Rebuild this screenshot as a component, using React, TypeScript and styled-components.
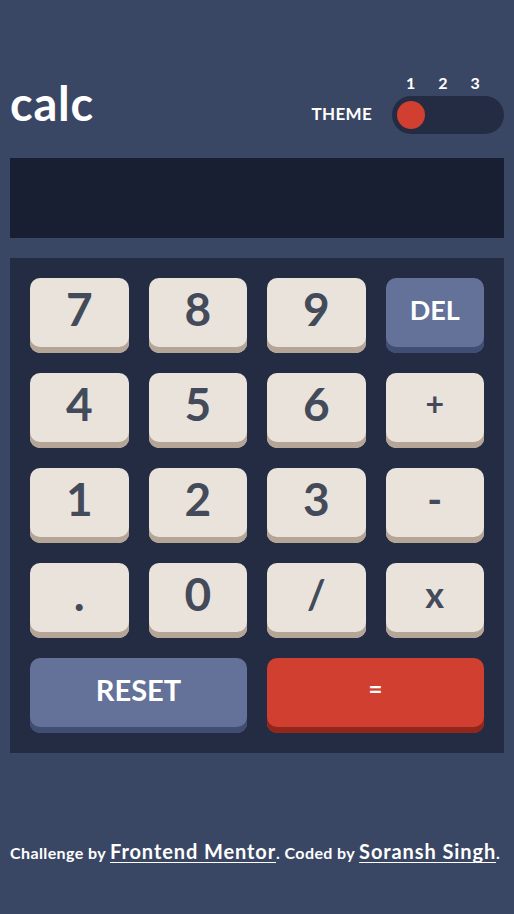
import React from "react";
import styled, { createGlobalStyle } from "styled-components";

const Global = createGlobalStyle`
  html, body { margin: 0; padding: 0; background: #3a4764; }
  body { font-family: "Lato", "Noto Sans", sans-serif; font-weight: 700; color: #ffffff; }
  * { box-sizing: border-box; }
`;

const Page = styled.main`
  width: 514px;
  min-height: 914px;
  padding: 0 10px;
  display: flex;
  flex-direction: column;
`;

const Header = styled.header`
  margin-top: 74px;
  height: 60px;
  display: flex;
  justify-content: space-between;
  align-items: flex-end;
`;

const Logo = styled.h1`
  margin: 0 0 7px 0;
  font-size: 47px;
  line-height: 1;
  font-weight: 700;
  letter-spacing: 0.8px;
`;

const ThemeWrap = styled.div`
  display: flex;
  align-items: flex-end;
  gap: 20px;
`;

const ThemeLabel = styled.span`
  font-size: 17px;
  line-height: 1;
  margin-bottom: 12px;
  letter-spacing: 0.3px;
`;

const ToggleCol = styled.div`
  display: flex;
  flex-direction: column;
  gap: 5px;
`;

const Numbers = styled.div`
  display: flex;
  padding-left: 14px;
  gap: 23px;
  font-size: 16px;
  line-height: 1;
`;

const Track = styled.div`
  width: 112px;
  height: 38px;
  border-radius: 19px;
  background: #232c43;
  display: flex;
  align-items: center;
  padding: 0 5px;
`;

const Knob = styled.span`
  width: 28px;
  height: 28px;
  border-radius: 50%;
  background: #d03f2f;
`;

const Display = styled.div`
  margin-top: 24px;
  height: 80px;
  background: #181f33;
`;

const Keypad = styled.section`
  margin-top: 20px;
  background: #232c43;
  padding: 20px;
  display: grid;
  grid-template-columns: repeat(4, 1fr);
  gap: 20px;
`;

type Variant = "num" | "fn" | "eq";

const palette: Record<Variant, { bg: string; shadow: string; color: string }> = {
  num: { bg: "#eae3dc", shadow: "#b4a597", color: "#434a59" },
  fn: { bg: "#647198", shadow: "#414e73", color: "#ffffff" },
  eq: { bg: "#d03f2f", shadow: "#93261a", color: "#ffffff" },
};

const Key = styled.button<{ $v: Variant; $wide?: boolean; $size: number }>`
  height: 75px;
  grid-column: ${(p) => (p.$wide ? "span 2" : "span 1")};
  border: none;
  border-radius: 10px;
  background: ${(p) => palette[p.$v].bg};
  box-shadow: inset 0 -6px 0 ${(p) => palette[p.$v].shadow};
  color: ${(p) => palette[p.$v].color};
  font-family: "Lato", "Noto Sans", sans-serif;
  font-weight: 700;
  font-size: ${(p) => p.$size}px;
  line-height: 1;
  padding: 0 0 13px 0;
  display: flex;
  align-items: center;
  justify-content: center;
`;

const Footer = styled.footer`
  margin-top: 88px;
  font-size: 16px;
  letter-spacing: 0.4px;
  line-height: 1;
  white-space: nowrap;
`;

const FLink = styled.a`
  color: #ffffff;
  font-size: 20px;
  letter-spacing: 0.9px;
  text-decoration: underline;
  text-decoration-thickness: 1px;
  text-underline-offset: 3px;
`;

const keys: { label: string; v: Variant; size: number; wide?: boolean }[] = [
  { label: "7", v: "num", size: 46 },
  { label: "8", v: "num", size: 46 },
  { label: "9", v: "num", size: 46 },
  { label: "DEL", v: "fn", size: 27 },
  { label: "4", v: "num", size: 46 },
  { label: "5", v: "num", size: 46 },
  { label: "6", v: "num", size: 46 },
  { label: "+", v: "num", size: 32 },
  { label: "1", v: "num", size: 46 },
  { label: "2", v: "num", size: 46 },
  { label: "3", v: "num", size: 46 },
  { label: "-", v: "num", size: 40 },
  { label: ".", v: "num", size: 46 },
  { label: "0", v: "num", size: 46 },
  { label: "/", v: "num", size: 40 },
  { label: "x", v: "num", size: 36 },
  { label: "RESET", v: "fn", size: 29, wide: true },
  { label: "=", v: "eq", size: 24, wide: true },
];

export default function App() {
  return (
    <>
      <Global />
      <Page>
        <Header>
          <Logo>calc</Logo>
          <ThemeWrap>
            <ThemeLabel>THEME</ThemeLabel>
            <ToggleCol>
              <Numbers>
                <span>1</span>
                <span>2</span>
                <span>3</span>
              </Numbers>
              <Track>
                <Knob />
              </Track>
            </ToggleCol>
          </ThemeWrap>
        </Header>
        <Display />
        <Keypad>
          {keys.map((k) => (
            <Key key={k.label} $v={k.v} $size={k.size} $wide={k.wide}>
              {k.label}
            </Key>
          ))}
        </Keypad>
        <Footer>
          Challenge by <FLink href="#">Frontend Mentor</FLink>. Coded by{" "}
          <FLink href="#">Soransh Singh</FLink>.
        </Footer>
      </Page>
    </>
  );
}
